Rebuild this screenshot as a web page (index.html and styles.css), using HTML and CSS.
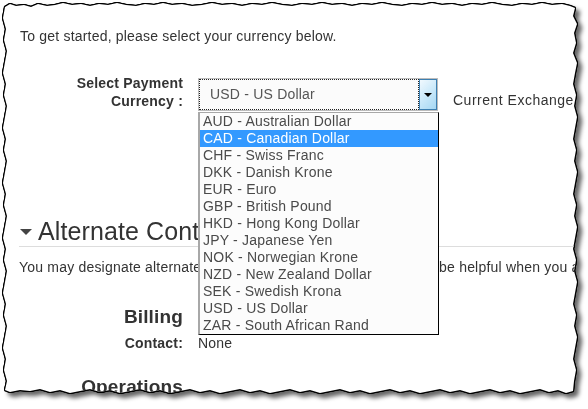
FILE: index.html
```html
<!DOCTYPE html>
<html lang="en">
  <head>
    <meta charset="UTF-8" />
    <meta name="viewport" content="width=device-width, initial-scale=1.0" />
    <title>Payment Currency</title>
    <link rel="stylesheet" href="styles.css">
  </head>
  <body>
    <div class="frame">
      <div class="paper">
        <p class="intro">To get started, please select your currency below.</p>

        <div class="currency-row">
          <label class="field-label">Select Payment<br />Currency :</label>
          <div class="select">
            <div class="select-box">
              <div class="select-value">USD - US Dollar</div>
              <div class="select-btn"><span class="caret"></span></div>
            </div>
            <ul class="options">
              <li>AUD - Australian Dollar</li>
              <li class="active">CAD - Canadian Dollar</li>
              <li>CHF - Swiss Franc</li>
              <li>DKK - Danish Krone</li>
              <li>EUR - Euro</li>
              <li>GBP - British Pound</li>
              <li>HKD - Hong Kong Dollar</li>
              <li>JPY - Japanese Yen</li>
              <li>NOK - Norwegian Krone</li>
              <li>NZD - New Zealand Dollar</li>
              <li>SEK - Swedish Krona</li>
              <li>USD - US Dollar</li>
              <li>ZAR - South African Rand</li>
            </ul>
          </div>
          <div class="exchange">Current Exchange Rate: 1.00 USD</div>
        </div>

        <h2 class="section-title"><span class="toggle"></span>Alternate Contacts</h2>
        <p class="section-text">You may designate alternate contacts for your account which can be helpful when you are away.</p>

        <div class="contact-group">
          <h3 class="group-title">Billing</h3>
          <div class="field-row">
            <span class="field-key">Contact:</span>
            <span class="field-value">None</span>
          </div>
        </div>

        <div class="contact-group">
          <h3 class="group-title">Operations</h3>
          <div class="field-row">
            <span class="field-key">Contact:</span>
            <span class="field-value">None</span>
          </div>
        </div>
      </div>
    </div>
  </body>
</html>
```

FILE: styles.css
```css
* {
  box-sizing: border-box;
  margin: 0;
  padding: 0;
}

body {
  background: #fff;
  font-family: "Liberation Sans", Arial, sans-serif;
  font-size: 14px;
  letter-spacing: 0.2px;
  color: #333;
  overflow: hidden;
}

/* torn paper look */
.frame {
  width: 588px;
  height: 409px;
  filter: drop-shadow(1px 0 0 #000) drop-shadow(-1px 0 0 #000)
    drop-shadow(0 1px 0 #000) drop-shadow(0 -1px 0 #000)
    drop-shadow(4px 4px 2px rgba(0, 0, 0, 0.6));
}

.paper {
  width: 588px;
  height: 409px;
  background: #fff;
  padding: 28px 0 0 19px;
  white-space: nowrap;
  clip-path: polygon(
    5px 7px, 10px 4px, 16px 6px, 24px 5px, 31px 7px, 38px 4px, 47px 6px, 55px 5px, 63px 3px, 72px 5px,
    81px 4px, 90px 6px, 99px 4px, 108px 5px, 117px 3px, 126px 5px, 136px 6px, 145px 4px, 154px 5px,
    163px 3px, 172px 5px, 182px 4px, 192px 6px, 202px 5px, 212px 3px, 222px 5px, 232px 4px, 242px 6px,
    252px 4px, 262px 5px, 272px 3px, 282px 5px, 292px 6px, 302px 4px, 312px 5px, 322px 3px, 332px 5px,
    342px 4px, 352px 6px, 362px 4px, 372px 5px, 382px 3px, 392px 5px, 402px 6px, 412px 4px, 422px 5px,
    432px 3px, 442px 5px, 452px 4px, 462px 6px, 472px 4px, 482px 5px, 492px 3px, 502px 5px, 512px 6px,
    522px 4px, 532px 5px, 542px 3px, 552px 5px, 562px 4px, 570px 6px, 575px 8px,
    573px 16px, 577px 24px, 574px 33px, 576px 43px, 573px 53px, 577px 63px, 575px 73px, 573px 84px,
    576px 95px, 574px 106px, 577px 117px, 575px 128px, 573px 139px, 576px 150px, 574px 161px,
    577px 172px, 575px 183px, 573px 194px, 576px 205px, 574px 216px, 577px 227px, 575px 238px,
    573px 249px, 576px 260px, 574px 271px, 577px 282px, 575px 293px, 573px 304px, 576px 315px,
    574px 326px, 577px 337px, 575px 348px, 573px 359px, 576px 370px, 574px 381px, 573px 391px,
    566px 393px, 558px 390px, 549px 392px, 540px 389px, 530px 391px, 520px 393px, 510px 390px,
    500px 392px, 490px 389px, 480px 391px, 470px 393px, 460px 390px, 450px 392px, 440px 389px,
    430px 391px, 420px 393px, 410px 390px, 400px 392px, 390px 389px, 380px 391px, 370px 393px,
    360px 390px, 350px 392px, 340px 389px, 330px 391px, 320px 393px, 310px 390px, 300px 392px,
    290px 389px, 280px 391px, 270px 393px, 260px 390px, 250px 392px, 240px 389px, 230px 391px,
    220px 393px, 210px 390px, 200px 392px, 190px 389px, 180px 391px, 170px 393px, 160px 390px,
    150px 392px, 140px 389px, 130px 391px, 120px 393px, 110px 390px, 100px 392px, 90px 389px,
    80px 391px, 70px 393px, 60px 390px, 50px 392px, 40px 389px, 30px 391px, 20px 390px, 10px 392px,
    5px 390px,
    7px 381px, 4px 370px, 6px 359px, 3px 348px, 5px 337px, 7px 326px, 4px 315px, 6px 304px,
    3px 293px, 5px 282px, 7px 271px, 4px 260px, 6px 249px, 3px 238px, 5px 227px, 7px 216px,
    4px 205px, 6px 194px, 3px 183px, 5px 172px, 7px 161px, 4px 150px, 6px 139px, 3px 128px,
    5px 117px, 7px 106px, 4px 95px, 6px 84px, 3px 73px, 5px 62px, 7px 51px, 4px 40px, 6px 29px,
    3px 18px
  );
}

.intro {
  line-height: 17px;
  padding-left: 1px;
}

/* currency selector */
.currency-row {
  display: grid;
  grid-template-columns: 164px 240px auto;
  column-gap: 15px;
  align-items: start;
  margin-top: 29px;
}

.field-label {
  font-weight: bold;
  line-height: 18px;
  text-align: right;
  color: #333;
}

.select {
  position: relative;
  margin-top: 4px;
}

.select-box {
  display: flex;
  height: 33px;
  border: 1px solid #bcbcbc;
  background: #fbfbfb;
}

.select-value {
  flex: 1;
  border: 1px dotted #222;
  padding-left: 10px;
  line-height: 29px;
  color: #555;
}

.select-btn {
  width: 18px;
  border: 1px solid #3c7fb1;
  background: linear-gradient(135deg, #f1f9fe 0%, #c6e7f9 55%, #a5d7f3 100%);
  display: flex;
  align-items: center;
  justify-content: center;
}

.caret {
  width: 0;
  height: 0;
  border-left: 4px solid transparent;
  border-right: 4px solid transparent;
  border-top: 4px solid #000;
}

.options {
  position: absolute;
  top: 100%;
  left: 0;
  width: 241px;
  margin-top: 1px;
  list-style: none;
  background: #fcfcfc;
  border-top: 1px solid #a8a8a8;
  border-left: 2px solid #a8a8a8;
  border-right: 1px solid #000;
  border-bottom: 1px solid #000;
  z-index: 2;
}

.options li {
  height: 17px;
  line-height: 17px;
  padding-left: 3px;
  color: #4a4a4a;
}

.options li.active {
  background: #3399ff;
  color: #fff;
}

.exchange {
  padding-top: 17px;
  line-height: 18px;
  letter-spacing: 0.5px;
}

/* alternate contacts */
.section-title {
  display: flex;
  align-items: center;
  margin-top: 105px;
  font-size: 25px;
  font-weight: normal;
  letter-spacing: 0.1px;
  line-height: 30px;
  color: #333;
  border-bottom: 1px solid #ddd;
}

.toggle {
  width: 0;
  height: 0;
  margin: 2px 6px 0 1px;
  border-left: 6px solid transparent;
  border-right: 6px solid transparent;
  border-top: 6px solid #444;
}

.section-text {
  margin-top: 12px;
  line-height: 17px;
}

.contact-group {
  display: grid;
  grid-template-columns: 164px 1fr;
  column-gap: 15px;
  margin-top: 30px;
}

.contact-group + .contact-group {
  margin-top: 24px;
}

.group-title {
  font-size: 19px;
  letter-spacing: 0.15px;
  line-height: 22px;
  text-align: right;
  color: #333;
}

.field-row {
  grid-column: 1 / 3;
  display: grid;
  grid-template-columns: 164px 1fr;
  column-gap: 15px;
  margin-top: 7px;
  line-height: 17px;
}

.field-key {
  font-weight: bold;
  text-align: right;
}
```
